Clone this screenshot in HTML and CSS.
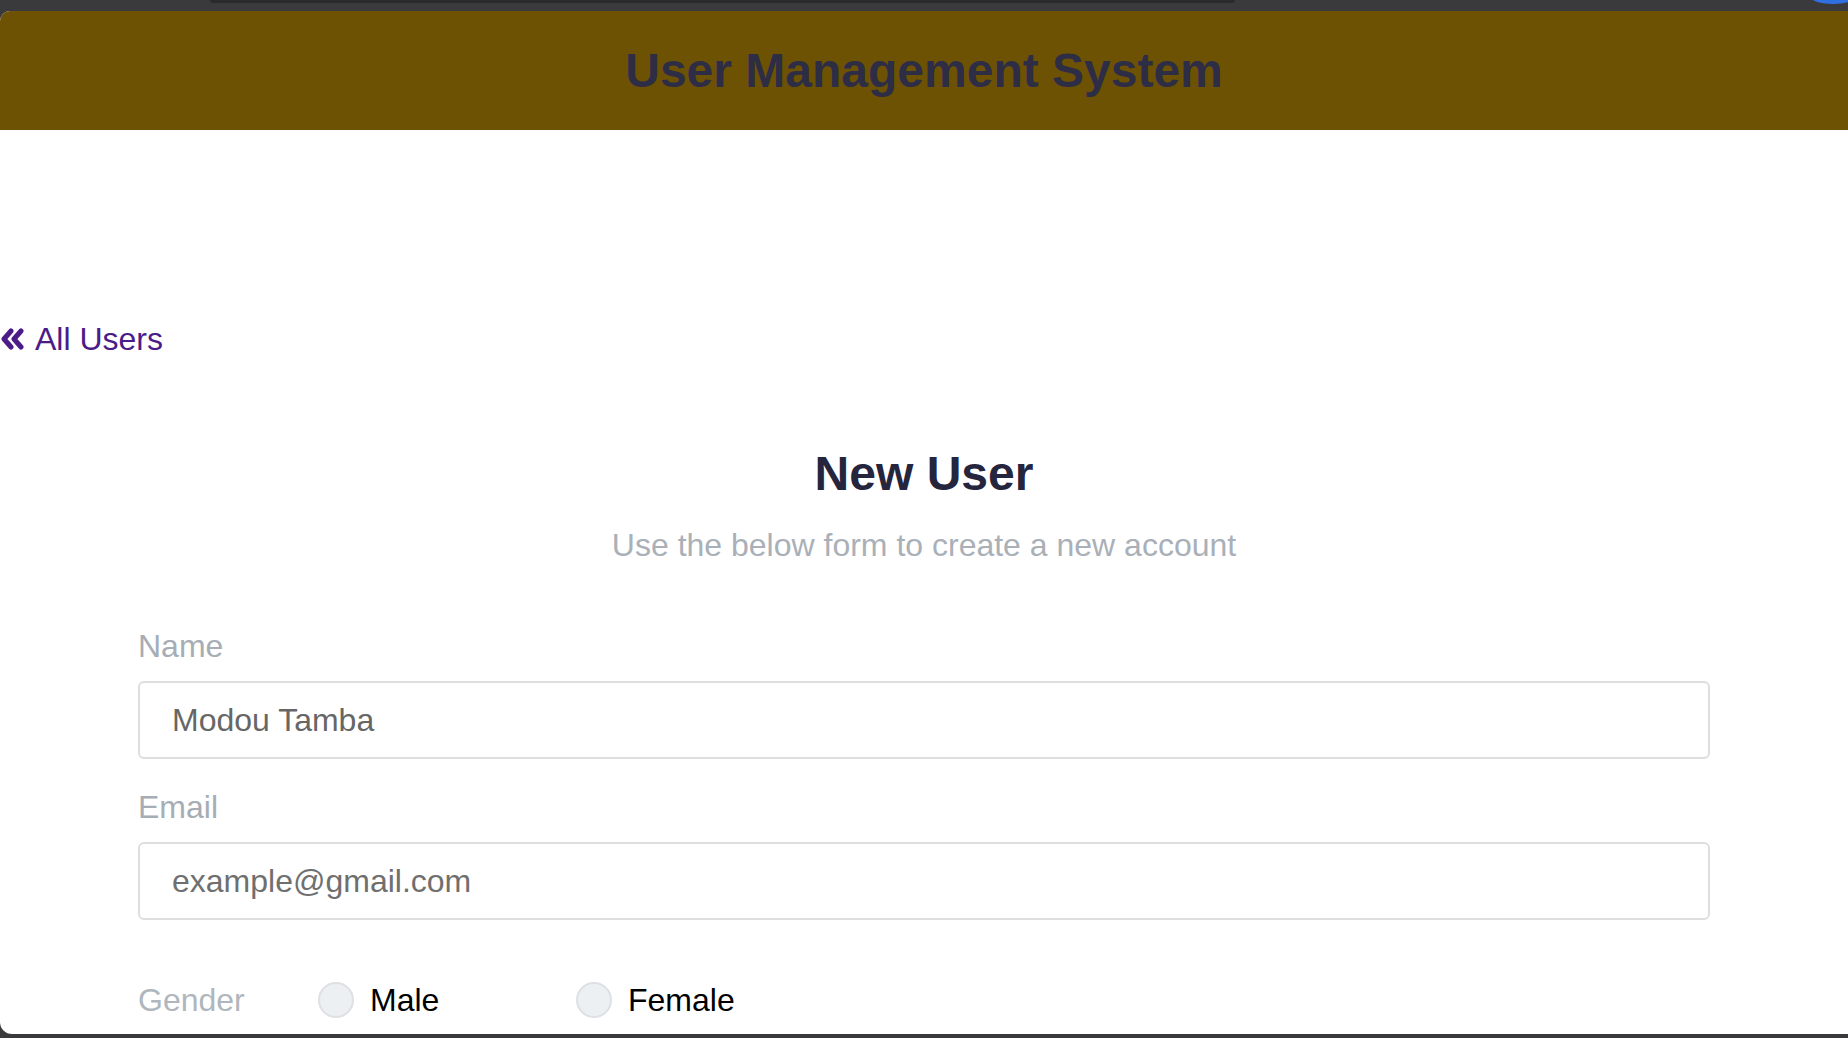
FILE: index.html
```html
<!DOCTYPE html>
<html lang="en">
<head>
<meta charset="utf-8">
<title>User Management System</title>
<link rel="stylesheet" href="styles.css">
</head>
<body>
<div class="chrome">
  <div class="tabstrip"></div>
  <div class="blue-dot"></div>
</div>
<div class="window">
  <header class="topbar">
    <h1 class="brand">User Management System</h1>
  </header>
  <main class="content">
    <a class="back-link" href="#">
      <svg class="chev" width="26" height="22" viewBox="0 0 26 22" aria-hidden="true">
        <path d="M11 3 L4 11 L11 19 M21 3 L14 11 L21 19" fill="none" stroke="#4b1c88" stroke-width="5" stroke-linecap="round" stroke-linejoin="round"/>
      </svg>
      <span>All Users</span>
    </a>
    <section class="form-head">
      <h2 class="form-title">New User</h2>
      <p class="form-sub">Use the below form to create a new account</p>
    </section>
    <form class="user-form">
      <label class="field-label" for="name">Name</label>
      <input class="field-input" id="name" type="text" value="Modou Tamba">
      <label class="field-label email-label" for="email">Email</label>
      <input class="field-input" id="email" type="text" placeholder="example@gmail.com">
      <div class="gender-row">
        <span class="gender-label">Gender</span>
        <label class="option"><span class="radio"></span><span class="option-text">Male</span></label>
        <label class="option"><span class="radio"></span><span class="option-text">Female</span></label>
      </div>
    </form>
  </main>
</div>
</body>
</html>
```

FILE: styles.css
```css
* { box-sizing: border-box; }
html, body { margin: 0; padding: 0; }
body {
  background: #3a3a3c;
  font-family: "Liberation Sans", Arial, sans-serif;
  height: 1038px;
  overflow: hidden;
}
.chrome {
  position: relative;
  height: 11px;
}
.tabstrip {
  margin-left: 210px;
  width: 1025px;
  height: 3px;
  background: #2a2a2b;
  border-radius: 0 0 6px 6px;
}
.blue-dot {
  position: absolute;
  right: -6px;
  top: -8px;
  width: 42px;
  height: 12px;
  border-radius: 50%;
  background: #2f6fe0;
}
.window {
  height: 1023px;
  background: #ffffff;
  border-radius: 10px 0 0 12px;
  overflow: hidden;
}
.topbar {
  height: 119px;
  background: #6e5204;
  display: flex;
  align-items: center;
  justify-content: center;
}
.brand {
  margin: 0;
  font-size: 48px;
  line-height: 56px;
  font-weight: 700;
  color: #2e2d46;
}
.content {
  padding-top: 189px;
}
.back-link {
  display: inline-flex;
  align-items: center;
  gap: 9px;
  color: #4b1c88;
  text-decoration: none;
  font-size: 32px;
  line-height: 40px;
}
.chev { display: block; }
.form-head {
  text-align: center;
  margin-top: 87px;
}
.form-title {
  margin: 0;
  font-size: 48px;
  line-height: 56px;
  font-weight: 700;
  color: #25253d;
}
.form-sub {
  margin: 25px 0 0;
  font-size: 32px;
  line-height: 36px;
  color: #a9b0b8;
}
.user-form {
  width: 1572px;
  margin: 65px auto 0;
  display: flex;
  flex-direction: column;
}
.field-label {
  font-size: 32px;
  line-height: 36px;
  color: #a6adb5;
}
.email-label { margin-top: 30px; }
.field-input {
  margin-top: 17px;
  height: 78px;
  width: 100%;
  border: 2px solid #dedede;
  border-radius: 6px;
  padding: 0 32px;
  font-family: "Liberation Sans", Arial, sans-serif;
  font-size: 32px;
  color: #666666;
  background: #fff;
  outline: none;
}
.field-input::placeholder { color: #6f6f6f; opacity: 1; }
.gender-row {
  margin-top: 62px;
  display: flex;
  align-items: center;
  height: 36px;
}
.gender-label {
  width: 180px;
  font-size: 32px;
  line-height: 36px;
  color: #b0b6bd;
}
.option {
  width: 258px;
  display: flex;
  align-items: center;
  gap: 16px;
  font-size: 32px;
  line-height: 36px;
  color: #000;
}
.radio {
  width: 36px;
  height: 36px;
  border-radius: 50%;
  background: #edf0f3;
  border: 2px solid #dde1e6;
  flex: none;
}
```
